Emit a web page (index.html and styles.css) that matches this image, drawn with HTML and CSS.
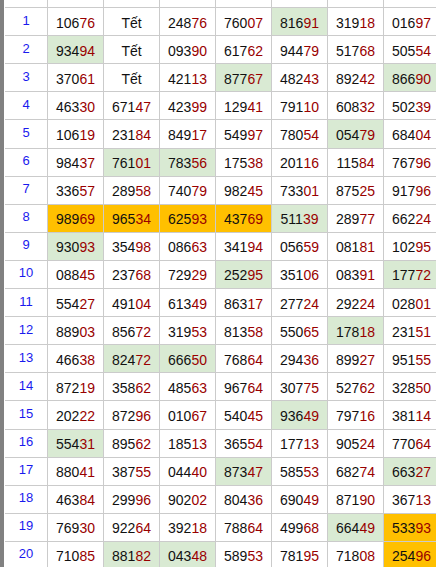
FILE: index.html
```html
<!DOCTYPE html>
<html>
<head>
<meta charset="utf-8">
<link rel="stylesheet" href="styles.css">
</head>
<body>
<div class="frame">
<div class="sheet">
<div class="n h">14</div><div class="c h"></div><div class="c h"></div><div class="c h"></div><div class="c h"></div><div class="c h"></div><div class="c h"></div><div class="c h"></div>

<div class="n">1</div><div class="c">106<span class="r">76</span></div><div class="c">Tết</div><div class="c">248<span class="r">76</span></div><div class="c">760<span class="r">07</span></div><div class="c g">816<span class="r">91</span></div><div class="c">319<span class="r">18</span></div><div class="c">016<span class="r">97</span></div>
<div class="n">2</div><div class="c g">934<span class="r">94</span></div><div class="c">Tết</div><div class="c">093<span class="r">90</span></div><div class="c">617<span class="r">62</span></div><div class="c">944<span class="r">79</span></div><div class="c">517<span class="r">68</span></div><div class="c">505<span class="r">54</span></div>
<div class="n">3</div><div class="c">370<span class="r">61</span></div><div class="c">Tết</div><div class="c">421<span class="r">13</span></div><div class="c g">877<span class="r">67</span></div><div class="c">482<span class="r">43</span></div><div class="c">892<span class="r">42</span></div><div class="c g">866<span class="r">90</span></div>
<div class="n">4</div><div class="c">463<span class="r">30</span></div><div class="c">671<span class="r">47</span></div><div class="c">423<span class="r">99</span></div><div class="c">129<span class="r">41</span></div><div class="c">791<span class="r">10</span></div><div class="c">608<span class="r">32</span></div><div class="c">502<span class="r">39</span></div>
<div class="n">5</div><div class="c">106<span class="r">19</span></div><div class="c">231<span class="r">84</span></div><div class="c">849<span class="r">17</span></div><div class="c">549<span class="r">97</span></div><div class="c">780<span class="r">54</span></div><div class="c g">054<span class="r">79</span></div><div class="c">684<span class="r">04</span></div>
<div class="n">6</div><div class="c">984<span class="r">37</span></div><div class="c g">761<span class="r">01</span></div><div class="c g">783<span class="r">56</span></div><div class="c">175<span class="r">38</span></div><div class="c">201<span class="r">16</span></div><div class="c">115<span class="r">84</span></div><div class="c">767<span class="r">96</span></div>
<div class="n">7</div><div class="c">336<span class="r">57</span></div><div class="c">289<span class="r">58</span></div><div class="c">740<span class="r">79</span></div><div class="c">982<span class="r">45</span></div><div class="c">733<span class="r">01</span></div><div class="c">875<span class="r">25</span></div><div class="c">917<span class="r">96</span></div>
<div class="n">8</div><div class="c o">989<span class="r">69</span></div><div class="c o">965<span class="r">34</span></div><div class="c o">625<span class="r">93</span></div><div class="c o">437<span class="r">69</span></div><div class="c g">511<span class="r">39</span></div><div class="c">289<span class="r">77</span></div><div class="c">662<span class="r">24</span></div>
<div class="n">9</div><div class="c g">930<span class="r">93</span></div><div class="c">354<span class="r">98</span></div><div class="c">086<span class="r">63</span></div><div class="c">341<span class="r">94</span></div><div class="c">056<span class="r">59</span></div><div class="c">081<span class="r">81</span></div><div class="c">102<span class="r">95</span></div>
<div class="n">10</div><div class="c">088<span class="r">45</span></div><div class="c">237<span class="r">68</span></div><div class="c">729<span class="r">29</span></div><div class="c g">252<span class="r">95</span></div><div class="c">351<span class="r">06</span></div><div class="c">083<span class="r">91</span></div><div class="c g">177<span class="r">72</span></div>
<div class="n">11</div><div class="c">554<span class="r">27</span></div><div class="c">491<span class="r">04</span></div><div class="c">613<span class="r">49</span></div><div class="c">863<span class="r">17</span></div><div class="c">277<span class="r">24</span></div><div class="c">292<span class="r">24</span></div><div class="c">028<span class="r">01</span></div>
<div class="n">12</div><div class="c">889<span class="r">03</span></div><div class="c">856<span class="r">72</span></div><div class="c">319<span class="r">53</span></div><div class="c">813<span class="r">58</span></div><div class="c">550<span class="r">65</span></div><div class="c g">178<span class="r">18</span></div><div class="c">231<span class="r">51</span></div>
<div class="n">13</div><div class="c">466<span class="r">38</span></div><div class="c g">824<span class="r">72</span></div><div class="c g">666<span class="r">50</span></div><div class="c">768<span class="r">64</span></div><div class="c">294<span class="r">36</span></div><div class="c">899<span class="r">27</span></div><div class="c">951<span class="r">55</span></div>
<div class="n">14</div><div class="c">872<span class="r">19</span></div><div class="c">358<span class="r">62</span></div><div class="c">485<span class="r">63</span></div><div class="c">967<span class="r">64</span></div><div class="c">307<span class="r">75</span></div><div class="c">527<span class="r">62</span></div><div class="c">328<span class="r">50</span></div>
<div class="n">15</div><div class="c">202<span class="r">22</span></div><div class="c">872<span class="r">96</span></div><div class="c">010<span class="r">67</span></div><div class="c">540<span class="r">45</span></div><div class="c g">936<span class="r">49</span></div><div class="c">797<span class="r">16</span></div><div class="c">381<span class="r">14</span></div>
<div class="n">16</div><div class="c g">554<span class="r">31</span></div><div class="c">895<span class="r">62</span></div><div class="c">185<span class="r">13</span></div><div class="c">365<span class="r">54</span></div><div class="c">177<span class="r">13</span></div><div class="c">905<span class="r">24</span></div><div class="c">770<span class="r">64</span></div>
<div class="n">17</div><div class="c">880<span class="r">41</span></div><div class="c">387<span class="r">55</span></div><div class="c">044<span class="r">40</span></div><div class="c g">873<span class="r">47</span></div><div class="c">585<span class="r">53</span></div><div class="c">682<span class="r">74</span></div><div class="c g">663<span class="r">27</span></div>
<div class="n">18</div><div class="c">463<span class="r">84</span></div><div class="c">299<span class="r">96</span></div><div class="c">902<span class="r">02</span></div><div class="c">804<span class="r">36</span></div><div class="c">690<span class="r">49</span></div><div class="c">871<span class="r">90</span></div><div class="c">367<span class="r">13</span></div>
<div class="n">19</div><div class="c">769<span class="r">30</span></div><div class="c">922<span class="r">64</span></div><div class="c">392<span class="r">18</span></div><div class="c">788<span class="r">64</span></div><div class="c">499<span class="r">68</span></div><div class="c g">664<span class="r">49</span></div><div class="c o">533<span class="r">93</span></div>
<div class="n">20</div><div class="c">710<span class="r">85</span></div><div class="c g">881<span class="r">82</span></div><div class="c g">043<span class="r">48</span></div><div class="c">589<span class="r">53</span></div><div class="c">781<span class="r">95</span></div><div class="c">718<span class="r">08</span></div><div class="c o">254<span class="r">96</span></div>
<div class="n"></div><div class="c"></div><div class="c"></div><div class="c"></div><div class="c"></div><div class="c"></div><div class="c"></div><div class="c"></div>
</div>
</div>
</body>
</html>
```
FILE: styles.css
```css
html, body {
  margin: 0;
  padding: 0;
  background: #ffffff;
}
.frame {
  width: 436px;
  height: 567px;
  overflow: hidden;
  border-left: 4px solid #818181;
  box-sizing: border-box;
  background: #ffffff;
}
.sheet {
  display: grid;
  grid-template-columns: 42px repeat(7, 55px);
  grid-auto-rows: 27.1px;
  gap: 1px;
  background: #cbcbcb;
  width: max-content;
  margin-top: -20px;
  margin-left: 1px;
  font-family: "Liberation Sans", Arial, sans-serif;
}
.n, .c {
  background: #ffffff;
  display: flex;
  justify-content: center;
  align-items: center;
  white-space: nowrap;
}
.n {
  color: #1a1aee;
  font-size: 13px;
  padding-bottom: 3px;
  box-sizing: border-box;
}
.c {
  color: #111111;
  font-size: 14px;
  padding-top: 2px;
  box-sizing: border-box;
}
.r {
  color: #990000;
}
.g {
  background: #d9ead3;
}
.o {
  background: #ffc000;
}
```
